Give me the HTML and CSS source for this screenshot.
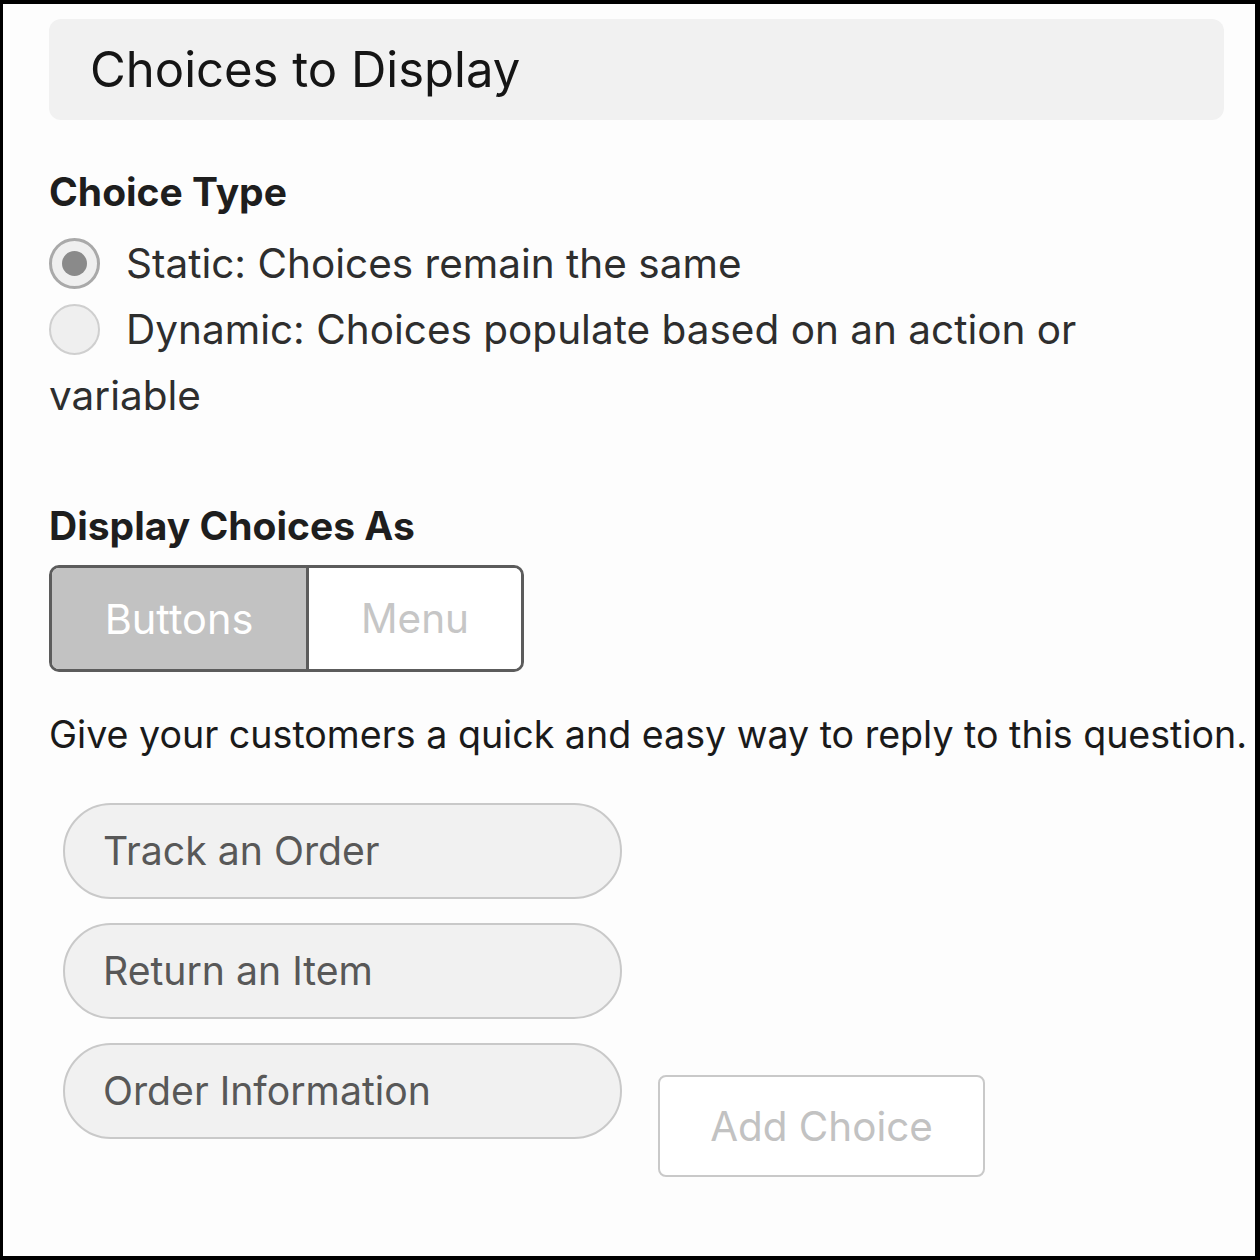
FILE: index.html
```html
<!DOCTYPE html>
<html lang="en">
<head>
    <meta charset="UTF-8">
    <meta name="viewport" content="width=device-width, initial-scale=1.0">
    <title>Choices to Display</title>
    <link rel="stylesheet" href="styles.css">
</head>
<body>
    <div class="frame">
        <div class="panel">
            <!-- Section Header -->
            <div class="section-header">Choices to Display</div>

            <!-- Choice Type -->
            <div class="field-label choice-type-label">Choice Type</div>
            <div class="radio-group">
                <label class="radio-row"><span class="radio checked"></span>Static: Choices remain the same</label>
                <label class="radio-row"><span class="radio"></span>Dynamic: Choices populate based on an action or variable</label>
            </div>

            <!-- Display Choices As -->
            <div class="field-label display-label">Display Choices As</div>
            <div class="segmented">
                <button class="segment active">Buttons</button>
                <button class="segment">Menu</button>
            </div>

            <p class="hint">Give your customers a quick and easy way to reply to this question.</p>

            <!-- Choices -->
            <div class="choices-row">
                <div class="choice-list">
                    <div class="choice-pill">Track an Order</div>
                    <div class="choice-pill">Return an Item</div>
                    <div class="choice-pill">Order Information</div>
                </div>
                <button class="add-choice-btn">Add Choice</button>
            </div>
        </div>
    </div>
</body>
</html>
```

FILE: styles.css
```css
/* Global Styling */
* {
    box-sizing: border-box;
}
body {
    margin: 0;
    font-family: Inter, "Noto Sans", sans-serif;
    color: #1e1e1e;
}
/* Outer frame */
.frame {
    width: 1260px;
    height: 1260px;
    border-style: solid;
    border-color: #000;
    border-width: 4px 5px 4px 3px;
    background-color: #fdfdfd;
    overflow: hidden;
}
.panel {
    padding: 15px 31px 0 46px;
}
/* Header */
.section-header {
    height: 101px;
    background-color: #f1f1f1;
    border-radius: 12px;
    padding-left: 41px;
    font-size: 49px;
    line-height: 101px;
    color: #151515;
}
/* Labels */
.field-label {
    font-weight: 700;
    font-size: 39px;
    line-height: 50px;
    color: #1e1e1e;
}
.choice-type-label {
    margin-top: 47px;
}
.display-label {
    margin-top: 72px;
}
/* Radios */
.radio-group {
    margin-top: 14px;
    width: 1100px;
}
.radio-row {
    display: block;
    font-size: 40.5px;
    line-height: 66px;
    color: #2e2e2e;
}
.radio {
    display: inline-block;
    width: 51px;
    height: 51px;
    border-radius: 50%;
    border: 2px solid #cfcfcf;
    background-color: #efefef;
    vertical-align: middle;
    margin: -6px 26px 0 0;
    position: relative;
}
.radio.checked {
    border: 3px solid #a9a9a9;
}
.radio.checked::after {
    content: "";
    position: absolute;
    left: 10px;
    top: 10px;
    width: 25px;
    height: 25px;
    border-radius: 50%;
    background-color: #8a8a8a;
}
/* Segmented control */
.segmented {
    margin-top: 14px;
    display: flex;
    width: 475px;
    height: 107px;
    border: 3px solid #5c5c5c;
    border-radius: 10px;
    overflow: hidden;
    background-color: #fff;
}
.segment {
    border: none;
    font-family: inherit;
    font-size: 40.5px;
    background-color: #fff;
    color: #c6c6c6;
    padding: 0;
}
.segment.active {
    width: 257px;
    background-color: #c2c2c2;
    color: #fff;
    border-right: 3px solid #5c5c5c;
    font-size: 41.5px;
}
.segment:last-child {
    flex: 1;
}
/* Hint */
.hint {
    margin: 30px 0 0;
    font-size: 37.6px;
    line-height: 66px;
    color: #1a1a1a;
    white-space: nowrap;
}
/* Choices */
.choices-row {
    margin-top: 35px;
    margin-left: 14px;
    display: flex;
    gap: 36px;
}
.choice-list {
    display: flex;
    flex-direction: column;
    gap: 24px;
}
.choice-pill {
    width: 559px;
    height: 96px;
    border: 2px solid #c9c9c9;
    border-radius: 48px;
    background-color: #f1f1f1;
    padding-left: 38px;
    font-size: 39.2px;
    line-height: 92px;
    color: #585858;
}
.add-choice-btn {
    align-self: flex-start;
    margin-top: 272px;
    width: 327px;
    height: 102px;
    border: 2px solid #c9c9c9;
    border-radius: 8px;
    background-color: #fff;
    font-family: inherit;
    font-size: 40.4px;
    color: #c2c2c2;
}
```
